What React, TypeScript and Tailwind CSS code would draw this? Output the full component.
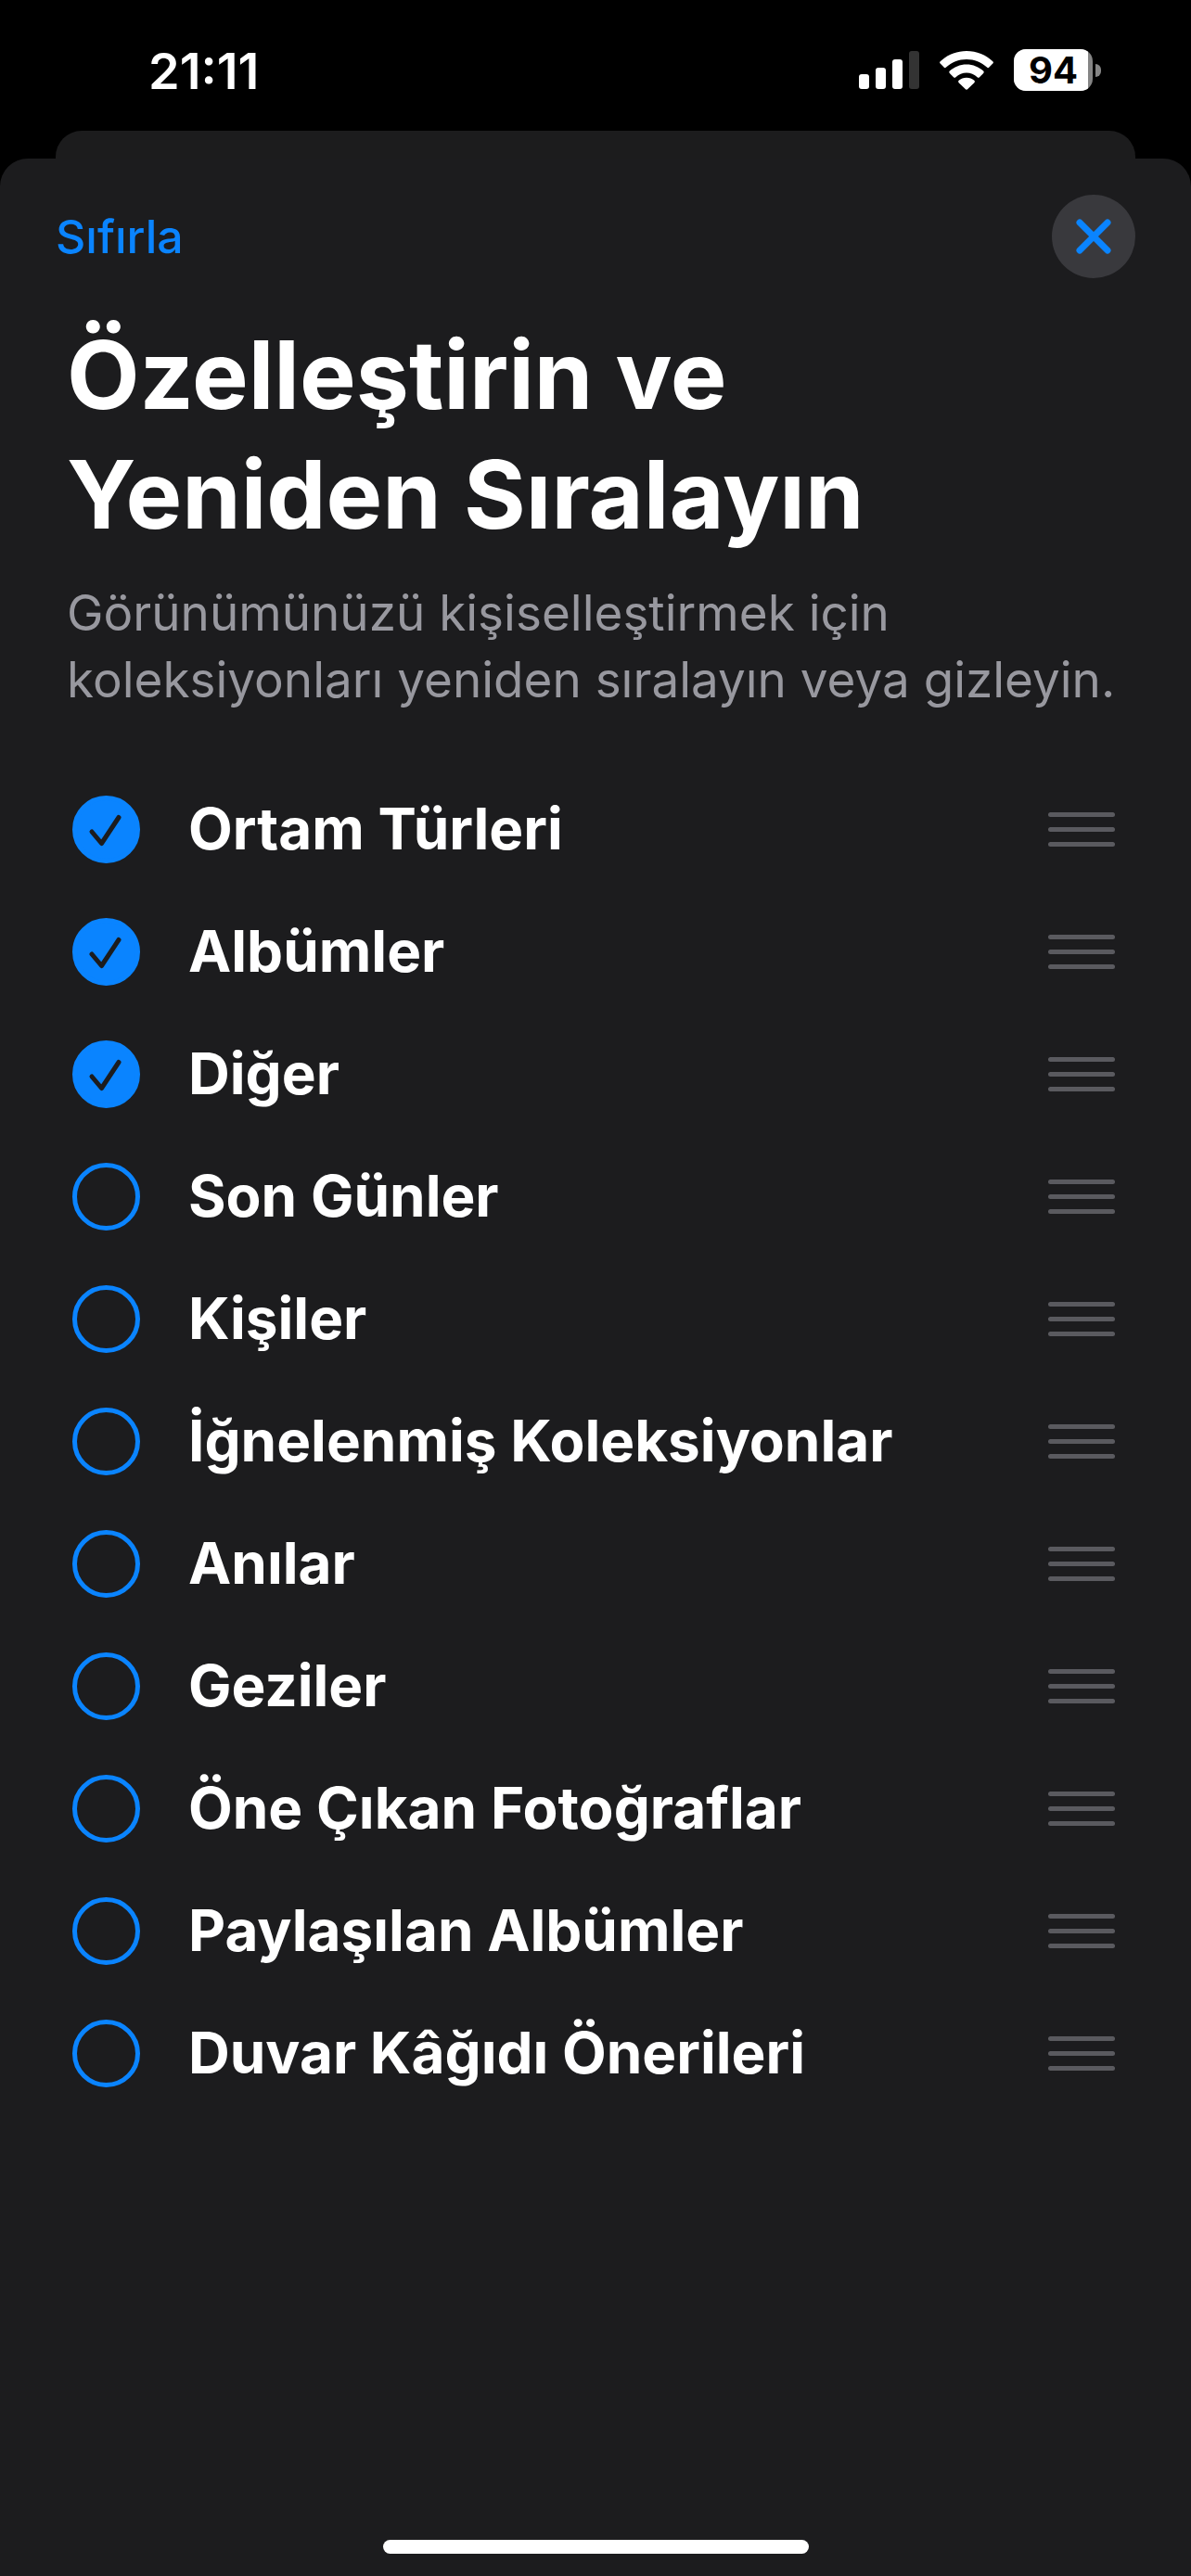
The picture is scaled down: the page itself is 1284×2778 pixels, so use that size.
import React, { useState } from 'react';

interface Collection {
  id: string;
  label: string;
  visible: boolean;
}

const DEFAULT_COLLECTIONS: Collection[] = [
  { id: 'media-types', label: 'Ortam Türleri', visible: true },
  { id: 'albums', label: 'Albümler', visible: true },
  { id: 'other', label: 'Diğer', visible: true },
  { id: 'recent-days', label: 'Son Günler', visible: false },
  { id: 'people', label: 'Kişiler', visible: false },
  { id: 'pinned', label: 'İğnelenmiş Koleksiyonlar', visible: false },
  { id: 'memories', label: 'Anılar', visible: false },
  { id: 'trips', label: 'Geziler', visible: false },
  { id: 'featured', label: 'Öne Çıkan Fotoğraflar', visible: false },
  { id: 'shared', label: 'Paylaşılan Albümler', visible: false },
  { id: 'wallpaper', label: 'Duvar Kâğıdı Önerileri', visible: false },
];

const SignalIcon: React.FC = () => (
  <svg width="65" height="42" viewBox="0 0 65 42" fill="#fff" aria-hidden="true">
    <rect x="0" y="25" width="11" height="16" rx="3" />
    <rect x="18" y="18" width="11" height="23" rx="3" />
    <rect x="36" y="9" width="11" height="32" rx="3" />
    <rect x="54" y="0" width="11" height="41" rx="3" fill="#333" />
  </svg>
);

const WifiIcon: React.FC = () => (
  <svg width="58" height="42" viewBox="0 0 58 42" fill="#fff" aria-hidden="true">
    <path d="M29 0C40 0 50 4.3 57.3 11.2q1.2 1.2 0 2.4L53.4 17.6q-1.2 1.1-2.4 0C45.2 12.1 37.5 9 29 9S12.800 12.1 7 17.6q-1.2 1.1-2.4 0L.7 13.6q-1.2-1.2 0-2.4C8 4.3 18 0 29 0Z" />
    <path d="M29 14.5c7 0 13.4 2.7 18.2 7.1q1.2 1.2 0 2.4l-4.2 4.2q-1.2 1.1-2.400 0C37.5 25.3 33.4 23.5 29 23.5s-8.5 1.8-11.6 4.7q-1.2 1.1-2.4 0L10.800 24q-1.2-1.2 0-2.4C15.6 17.2 22 14.5 29 14.5Z" />
    <path d="M29 28.8c3.2 0 6.1 1.1 8.3 3q1.2 1.2 0 2.4l-7 6.9q-1.3 1.2-2.6 0l-7-6.9q-1.2-1.2 0-2.4C22.9 29.9 25.8 28.8 29 28.8Z" />
  </svg>
);

const Battery: React.FC<{ level: number }> = ({ level }) => (
  <div className="flex items-center gap-[3px]">
    <div className="relative flex h-[45px] w-[85px] items-center justify-center">
      <div className="absolute inset-0 overflow-hidden rounded-[13px] bg-[#858585]">
        <div className="h-full bg-white" style={{ width: `${level}%` }} />
      </div>
      <span className="relative text-[40px] leading-[45px] font-bold text-black">{level}</span>
    </div>
    <div className="h-[14px] w-[6px] rounded-r-full bg-[#858585]" />
  </div>
);

const StatusBar: React.FC = () => (
  <div className="flex h-[141px] items-start justify-between pt-[53px] pr-[97px] pl-[160px]">
    <time className="text-[54px] leading-[48px] font-semibold text-white">21:11</time>
    <div className="flex h-[45px] items-center gap-[22px]">
      <SignalIcon />
      <WifiIcon />
      <Battery level={94} />
    </div>
  </div>
);

const CollectionRow: React.FC<{ item: Collection; onToggle: (id: string) => void }> = ({ item, onToggle }) => (
  <li className="flex h-[132px] items-center justify-between">
    <label className="flex items-center gap-[52px]">
      <span className="grid size-[73px] place-items-center">
        <input
          type="checkbox"
          checked={item.visible}
          onChange={() => onToggle(item.id)}
          className="col-start-1 row-start-1 size-[73px] appearance-none rounded-full border-5 border-[#0a84ff] checked:bg-[#0a84ff]"
        />
        {item.visible && (
          <svg
            className="pointer-events-none col-start-1 row-start-1"
            width="73"
            height="73"
            viewBox="0 0 73 73"
            fill="none"
            stroke="#1c1c1e"
            strokeWidth="5"
            strokeLinecap="round"
            strokeLinejoin="round"
            aria-hidden="true"
          >
            <path d="M21 39 L31.5 51.5 L50 23.5" />
          </svg>
        )}
      </span>
      <span className="text-[62px] leading-[80px] font-bold text-white">{item.label}</span>
    </label>
    <button type="button" aria-label={`${item.label} sırasını değiştir`} className="flex flex-col gap-[11px]">
      <span className="h-[5px] w-[72px] rounded-full bg-[#5a5a5f]" />
      <span className="h-[5px] w-[72px] rounded-full bg-[#5a5a5f]" />
      <span className="h-[5px] w-[72px] rounded-full bg-[#5a5a5f]" />
    </button>
  </li>
);

const App: React.FC = () => {
  const [collections, setCollections] = useState<Collection[]>(DEFAULT_COLLECTIONS);

  const handleToggle = (id: string) => {
    setCollections((items) => items.map((c) => (c.id === id ? { ...c, visible: !c.visible } : c)));
  };

  return (
    <div className="flex min-h-screen flex-col bg-black font-['Inter','Liberation_Sans',sans-serif]">
      <StatusBar />

      {/* Edge of the sheet underneath */}
      <div className="mx-[60px] h-[30px] rounded-t-[28px] bg-[#1c1c1d]" />

      <main className="flex flex-1 flex-col rounded-t-[30px] bg-[#1c1c1e] pt-[39px]">
        <header className="flex h-[90px] items-center justify-between px-[60px]">
          <button
            type="button"
            onClick={() => setCollections(DEFAULT_COLLECTIONS)}
            className="text-[50px] leading-[60px] font-medium text-[#0a84ff]"
          >
            Sıfırla
          </button>
          <button type="button" aria-label="Kapat" className="flex size-[90px] items-center justify-center rounded-full bg-[#39393d]">
            <svg width="38" height="38" viewBox="0 0 38 38" stroke="#0a84ff" strokeWidth="7" strokeLinecap="round" aria-hidden="true">
              <path d="M4 4 L34 34 M34 4 L4 34" />
            </svg>
          </button>
        </header>

        <section className="mt-10 pr-10 pl-[72px]">
          <h1 className="text-[102px] leading-[129px] font-bold text-white">
            Özelleştirin ve
            <br />
            Yeniden Sıralayın
          </h1>
          <p className="mt-[27px] text-[53px] leading-[72px] text-[#98989f]">
            Görünümünüzü kişiselleştirmek için
            <br />
            koleksiyonları yeniden sıralayın veya gizleyin.
          </p>
        </section>

        <ul className="mt-[59px] pr-[82px] pl-[78px]">
          {collections.map((item) => (
            <CollectionRow key={item.id} item={item} onToggle={handleToggle} />
          ))}
        </ul>

        {/* Home indicator */}
        <div className="mx-auto mt-auto mb-6 h-[15px] w-[459px] rounded-full bg-white" />
      </main>
    </div>
  );
};

export default App;
